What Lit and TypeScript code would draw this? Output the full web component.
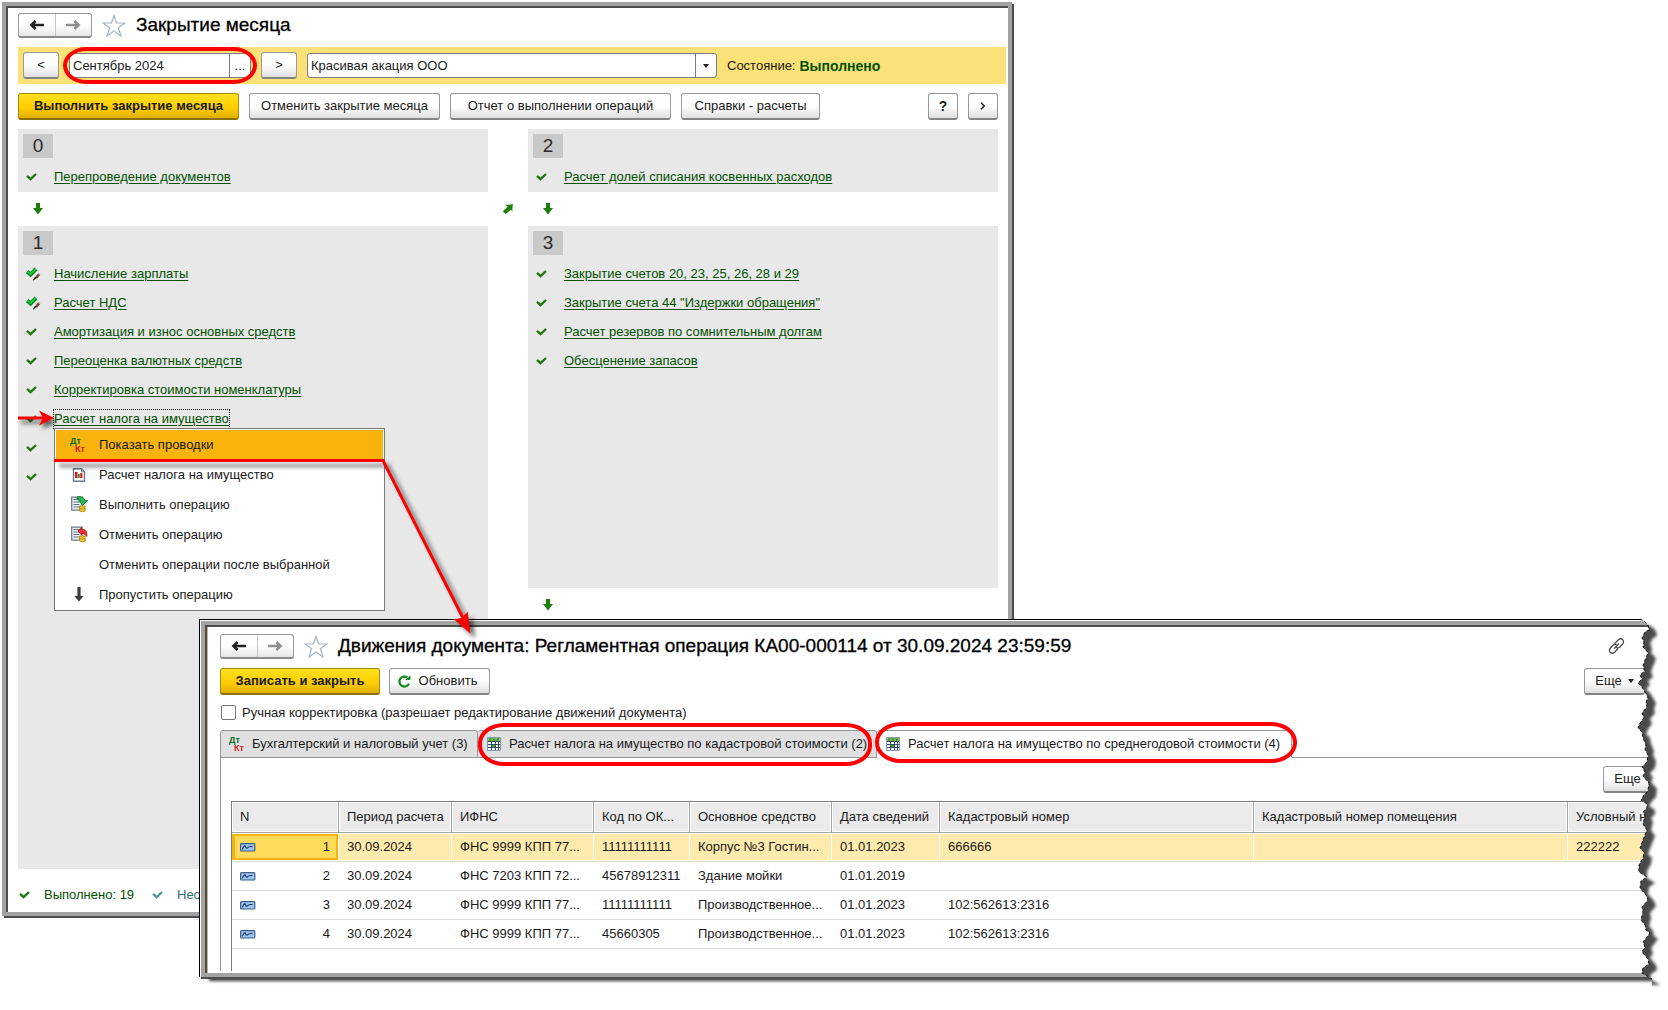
import { LitElement, html, css, svg, nothing } from "lit";
import { customElement } from "lit/decorators.js";
import { classMap } from "lit/directives/class-map.js";

const check = (color: string) => html`
  <svg class="ico" width="12" height="10" viewBox="0 0 12 10" aria-hidden="true">
    <path d="M1 3.8 L4.6 7.2 L10 2" fill="none" stroke=${color} stroke-width="2.4" />
  </svg>`;

const checkPencil = html`
  <svg class="ico" width="15" height="14" viewBox="0 0 15 14" aria-hidden="true">
    <path d="M1.2 4.6 L4.6 7.6 L10 2" fill="none" stroke="#0b8a1e" stroke-width="4" />
    <path d="M1.8 4.8 L4.6 7 L9.6 2.2" fill="none" stroke="#1cc83c" stroke-width="1.8" />
    <path d="M13 7.4 L10 11" stroke="#6e4530" stroke-width="2.6" />
    <path d="M13.6 6.6 L12.8 7.6" stroke="#caa496" stroke-width="2.4" />
    <path d="M10.4 10.6 L7.4 13.2 L8.8 10.6z" fill="#2a1a14" stroke="#2a1a14" stroke-width=".8" />
  </svg>`;

const downArrow = html`
  <svg class="ico" width="12" height="12" viewBox="0 0 12 12" aria-hidden="true">
    <path d="M4 0 H8 V5 H11 L6 11.5 L1 5 H4z" fill="#1f7d0c" />
  </svg>`;

const diagArrow = html`
  <svg class="ico" width="12" height="12" viewBox="0 0 12 12" aria-hidden="true">
    <path d="M3 1.4 Q7 2.2 11 1 Q10 5 10.6 8.6 L8.8 6.8 L3.6 11 L0.8 8.2 L5.6 3.8z" fill="#1f7d0c" />
  </svg>`;

const star = html`
  <svg class="star" width="24" height="23" viewBox="0 0 24 23" aria-hidden="true">
    <path d="M12 1.5 L14.6 9 H23 L16.4 13.8 L19 22 L12 17 L5 22 L7.6 13.8 L1 9 H9.4z"
      fill="#fff" stroke="#a9b4bf" stroke-width="1.2" />
  </svg>`;

const arrow = (color: string, flip: boolean) => html`
  <svg width="16" height="12" viewBox="0 0 16 12" aria-hidden="true">
    <path d=${flip ? "M1 6 H12 M9.4 2 L13.6 6 L9.4 10" : "M15 6 H4 M6.6 2 L2.4 6 L6.6 10"}
      fill="none" stroke=${color} stroke-width="2.6" />
  </svg>`;

const dtkt = html`
  <svg class="ico" width="18" height="16" viewBox="0 0 18 16" aria-hidden="true">
    <text x="0" y="7" font-family="Liberation Sans" font-weight="700" font-size="9" fill="#0b6b2b">Дт</text>
    <text x="5" y="15" font-family="Liberation Sans" font-weight="700" font-size="9" fill="#cc1f1f">Кт</text>
  </svg>`;

const report = html`
  <svg class="ico" width="14" height="14" viewBox="0 0 14 14" aria-hidden="true">
    <path d="M1.5 .8 H9.5 L12.5 3.8 V13.2 H1.5z" fill="#fff" stroke="#6c7f92" stroke-width="1.4" />
    <path d="M9.5 .8 V3.8 H12.5z" fill="#b9c6d3" stroke="#6c7f92" />
    <path d="M3 4h2.6v6H3z" fill="#e02020" />
    <path d="M6 6h1.8v4H6z" fill="#1c9a3c" />
    <path d="M8.2 5h2.2v5h-2.2z" fill="#e02020" />
  </svg>`;

const operation = (undo: boolean) => html`
  <svg class="ico" width="17" height="17" viewBox="0 0 17 17" aria-hidden="true">
    <path d="M.7 1.2 H11 V14.2 H.7z" fill="#eef3f8" stroke="#6e7f90" stroke-width="1.3" />
    <path d="M2.4 3.5h6M2.4 6h6M2.4 8.5h6M2.4 11h6" stroke="#5d7288" />
    <path d="M8.5 10 h5.6 v5 q-2.8 1.6-5.6 0z" fill="#f2c830" stroke="#a8810d" stroke-width=".8" />
    <path d="M8.5 12.4 q2.8 1.4 5.6 0" fill="none" stroke="#a8810d" stroke-width=".8" />
    ${undo
      ? svg`<path d="M7 5 L10.6 1.2 V3.2 Q16.8 3.4 15.8 10.4 Q14 7.6 10.6 7.2 V9z" fill="#f03030" stroke="#a01010" stroke-width=".8" />`
      : svg`<path d="M6 .8 Q13.4 0 13.6 4.4 H16.4 L11.8 9.2 L7.4 4.8 H10 Q9.6 2.8 6 3z" fill="#22c04a" stroke="#0c6e2a" stroke-width=".8" />`}
  </svg>`;

const skip = html`
  <svg class="ico" width="12" height="15" viewBox="0 0 12 15" aria-hidden="true">
    <path d="M4.4 0 H7.6 V9 H10.6 L6 14.4 L1.4 9 H4.4z" fill="#3c3c3c" />
  </svg>`;

const gridIcon = html`
  <svg class="ico" width="14" height="14" viewBox="0 0 14 14" aria-hidden="true">
    <path d="M.5 .5 H13.5 V13.5 H.5z" fill="#fff" stroke="#7d97aa" />
    <path d="M1 1h12v3H1z" fill="#8cc46a" />
    <path d="M2 1.6h2.4v2H2zM5.8 1.6h2.4v2H5.8zM9.6 1.6H12v2H9.6z" fill="#3f8a1e" />
    <path d="M1 4.5h12M1 7.5h12M1 10.5h12" stroke="#2f4c64" />
    <path d="M4.5 4v9M8.5 4v9M11.5 4v9" stroke="#2f4c64" />
    <path d="M5 8h3v2H5z" fill="#4d9a2c" />
  </svg>`;

const record = html`
  <svg class="ico" width="16" height="9" viewBox="0 0 16 9" aria-hidden="true">
    <rect x=".6" y=".6" width="14.2" height="7.4" rx="1" fill="#9cc6ee" stroke="#3d5f86" stroke-width="1.2" />
    <path d="M2.4 6.4 Q4 2 5.4 3 Q6 5.6 7.4 5 Q8.6 3.2 12.4 3.6" fill="none" stroke="#12305c" stroke-width="1.1" />
  </svg>`;

const refresh = html`
  <svg width="13" height="13" viewBox="0 0 13 13" aria-hidden="true">
    <path d="M11 8.6 A5 5 0 1 1 9.4 2.6" fill="none" stroke="#0e8a1f" stroke-width="2.2" />
    <path d="M7.4 5 H12.4 V.2z" fill="#0e8a1f" />
  </svg>`;

const link = html`
  <svg class="chain" width="17" height="18" viewBox="0 0 17 18" aria-hidden="true">
    <g fill="none" stroke="#4a4a4a" stroke-width="1.3" stroke-linecap="round">
      <path d="M7 6.4 L10.6 2.6 Q12.8 .8 14.8 2.8 Q16.4 4.8 14.6 7 L11.6 10.2 Q10 11.2 8.6 10.6" />
      <path d="M9.8 11.8 L6.4 15.4 Q4.2 17.2 2.2 15.2 Q.6 13.2 2.4 11 L5.4 7.8 Q6.6 7 8 7.4" />
      <path d="M6.6 11.2 L10.4 7" />
    </g>
  </svg>`;

type Task = { name: string; kind?: "pencil"; selected?: boolean };

const stageOne: Task[] = [
  { name: "Начисление зарплаты", kind: "pencil" },
  { name: "Расчет НДС", kind: "pencil" },
  { name: "Амортизация и износ основных средств" },
  { name: "Переоценка валютных средств" },
  { name: "Корректировка стоимости номенклатуры" },
  { name: "Расчет налога на имущество", selected: true },
  { name: "" },
  { name: "" },
];

const stageThree: Task[] = [
  { name: 'Закрытие счетов 20, 23, 25, 26, 28 и 29' },
  { name: 'Закрытие счета 44 "Издержки обращения"' },
  { name: "Расчет резервов по сомнительным долгам" },
  { name: "Обесценение запасов" },
];

const menuItems = [
  { icon: dtkt, name: "Показать проводки", active: true },
  { icon: report, name: "Расчет налога на имущество" },
  { icon: operation(false), name: "Выполнить операцию" },
  { icon: operation(true), name: "Отменить операцию" },
  { icon: nothing, name: "Отменить операции после выбранной" },
  { icon: skip, name: "Пропустить операцию" },
];

const base = css`
  * { box-sizing: border-box; }
  button, input, select {
    font: inherit;
    color: inherit;
    margin: 0;
  }
  .nav { display: flex; align-items: center; height: 24px; }
  .pair {
    display: flex;
    width: 74px;
    height: 25px;
    border: 1px solid #9b9b9b;
    border-bottom: 2px solid #8a8a8a;
    border-radius: 3px;
    background: linear-gradient(#fff 50%, #e6e6e6);
  }
  .pair button {
    flex: 1;
    display: flex;
    align-items: center;
    justify-content: center;
    border: 0;
    padding: 0;
    background: none;
  }
  .pair button + button { border-left: 1px solid #c4c4c4; }
  .star { margin: 0 10px; flex: none; }
  h1 {
    margin: 0;
    font-size: 19px;
    font-weight: 400;
    line-height: 24px;
    color: #000;
    white-space: nowrap;
    -webkit-text-stroke: 0.3px #000;
  }
  .btn {
    display: flex;
    align-items: center;
    justify-content: center;
    height: 27px;
    padding: 0 14px;
    border: 1px solid #989898;
    border-bottom: 2px solid #848484;
    border-radius: 3px;
    background: linear-gradient(#fff 50%, #dfdfdf);
    white-space: nowrap;
  }
  .gold {
    font-weight: 700;
    border-color: #a88a10;
    border-bottom-color: #8b7008;
    background: linear-gradient(#ffe01f, #ffcf00 55%, #e2b000);
  }
  .ico { display: block; flex: none; }
  .caret {
    width: 0;
    height: 0;
    border: 3px solid transparent;
    border-top: 4px solid #222;
    border-bottom: 0;
  }
`;

@customElement("closing-window")
export class ClosingWindow extends LitElement {
  static styles = [
    base,
    css`
      :host {
        display: flex;
        flex-direction: column;
        box-sizing: border-box;
        isolation: isolate;
        padding: 7px 2px 0 12px;
        border: 4px solid #a3a3a3;
        box-shadow: 2px 2px 0 #4d4d4d, inset 2px 2px 0 #4d4d4d;
        background: #fff;
      }
      .period {
        display: flex;
        align-items: center;
        gap: 10px;
        height: 37px;
        margin-top: 10px;
        padding: 0 5px;
        background: #fbe177;
      }
      .step { width: 36px; padding: 0; }
      .field {
        position: relative;
        display: flex;
        height: 25px;
        border: 1px solid #7d7d7d;
        border-radius: 3px;
        background: #fff;
      }
      .field input, .field select {
        flex: 1;
        min-width: 0;
        appearance: none;
        border: 0;
        padding: 0 3px;
        background: none;
        border-radius: 3px;
      }
      .field .more {
        width: 21px;
        border: 0;
        border-left: 1px solid #7d7d7d;
        padding: 0;
        background: none;
      }
      .field .drop {
        display: flex;
        align-items: center;
        justify-content: center;
        width: 21px;
        border-left: 1px solid #7d7d7d;
      }
      .date { width: 182px; }
      .date::after {
        content: "";
        position: absolute;
        inset: -7px;
        border: 4px solid #fe0000;
        border-radius: 24px / 19px;
        pointer-events: none;
      }
      .org { width: 410px; }
      .state { display: flex; gap: 4px; white-space: nowrap; }
      .state b { color: #005000; font-size: 14px; }
      .commands { display: flex; gap: 10px; margin: 9px 8px 0 0; }
      .commands .btn { flex: none; }
      .w-run { width: 221px; }
      .w-cancel { width: 191px; }
      .w-report { width: 221px; }
      .w-ref { width: 139px; }
      .commands .btn.help { width: 30px; padding: 0; font-weight: 700; font-size: 14px; margin-left: auto; }
      .commands .btn.next { width: 30px; padding: 0; font-weight: 700; }
      .stages {
        flex: 1;
        display: grid;
        grid-template-columns: 1fr 40px 1fr;
        margin: 9px 8px 0 0;
      }
      .col { display: flex; flex-direction: column; }
      .panel { padding: 5px 5px 1px; background: #e8e8e8; }
      .fill { flex: 1; }
      .tall { min-height: 362px; }
      .num {
        width: 30px;
        height: 24px;
        margin: 0 0 4px;
        font-size: 19px;
        font-weight: 400;
        line-height: 24px;
        text-align: center;
        background: #c9c9c9;
        color: #2b2b2b;
      }
      .flow { display: flex; align-items: center; height: 34px; padding-left: 14px; }
      .mid { display: flex; justify-content: center; padding-top: 74px; }
      ul { list-style: none; margin: 0; padding: 0; }
      .task { position: relative; display: flex; align-items: center; height: 29px; }
      .mark { width: 31px; padding-left: 3px; }
      .task a { color: #005000; text-underline-offset: 2px; }
      .selected a { outline: 1px dotted #000; outline-offset: 0; padding: 1px 0; }
      .pointer {
        position: absolute;
        left: -5px;
        top: 4px;
        filter: drop-shadow(3px 4px 2px rgba(0, 0, 0, 0.6));
      }
      .menu {
        position: absolute;
        z-index: 1;
        left: 31px;
        top: 24px;
        width: 331px;
        padding: 1px 1px 0;
        border: 1px solid #7a7a7a;
        background: #fff;
      }
      .menu button {
        display: flex;
        align-items: center;
        width: 100%;
        height: 30px;
        border: 0;
        padding: 0 0 1px;
        background: none;
        text-align: left;
      }
      .menu .active { background: #f8b30c; }
      .menu .glyph { display: flex; justify-content: center; width: 43px; padding-left: 3px; }
      .status {
        display: flex;
        align-items: center;
        height: 43px;
        padding: 9px 0 0 1px;
        color: #005000;
      }
      .done { width: 108px; }
      .status .mark2 { width: 25px; }
      .todo { color: #2b6f72; }
    `,
  ];

  private task(t: Task) {
    return html`
      <li class=${classMap({ task: true, selected: !!t.selected })}>
        <span class="mark">${t.kind ? checkPencil : check("#1f7a0c")}</span>
        ${t.name ? html`<a href="#">${t.name}</a>` : nothing}
        ${t.selected
          ? html`
              <svg class="pointer" width="36" height="20" viewBox="0 0 36 20" aria-hidden="true">
                <path d="M0 10 H26" stroke="#fe0000" stroke-width="3" />
                <path d="M36 10 L21 2.5 L25 10 L21 17.5z" fill="#fe0000" />
              </svg>
              <div class="menu" role="menu">
                ${menuItems.map(
                  (m) => html`
                    <button role="menuitem" class=${classMap({ active: !!m.active })}>
                      <span class="glyph">${m.icon}</span>${m.name}
                    </button>`
                )}
              </div>`
          : nothing}
      </li>`;
  }

  private panel(num: number, tasks: Task[], extra = "") {
    return html`
      <section class="panel ${extra}">
        <h2 class="num">${num}</h2>
        <ul>${tasks.map((t) => this.task(t))}</ul>
      </section>`;
  }

  render() {
    return html`
      <header class="nav">
        <div class="pair">
          <button aria-label="Назад">${arrow("#222", false)}</button>
          <button aria-label="Вперед">${arrow("#8f8f8f", true)}</button>
        </div>
        ${star}
        <h1>Закрытие месяца</h1>
      </header>
      <div class="period">
        <button class="btn step">&lt;</button>
        <div class="field date">
          <input aria-label="Период" value="Сентябрь 2024" />
          <button class="more" aria-label="Выбрать период">...</button>
        </div>
        <button class="btn step">&gt;</button>
        <div class="field org">
          <select aria-label="Организация"><option>Красивая акация ООО</option></select>
          <span class="drop"><span class="caret"></span></span>
        </div>
        <div class="state"><span>Состояние:</span><b>Выполнено</b></div>
      </div>
      <div class="commands">
        <button class="btn gold w-run">Выполнить закрытие месяца</button>
        <button class="btn w-cancel">Отменить закрытие месяца</button>
        <button class="btn w-report">Отчет о выполнении операций</button>
        <button class="btn w-ref">Справки - расчеты</button>
        <button class="btn help">?</button>
        <button class="btn next" aria-label="Далее">
          <svg width="6" height="8" viewBox="0 0 6 8" aria-hidden="true">
            <path d="M1 .8 L4.2 4 L1 7.2" fill="none" stroke="#222" stroke-width="1.6" />
          </svg>
        </button>
      </div>
      <main class="stages">
        <div class="col">
          ${this.panel(0, [{ name: "Перепроведение документов" }])}
          <div class="flow">${downArrow}</div>
          ${this.panel(1, stageOne, "fill")}
        </div>
        <div class="mid">${diagArrow}</div>
        <div class="col">
          ${this.panel(2, [{ name: "Расчет долей списания косвенных расходов" }])}
          <div class="flow">${downArrow}</div>
          ${this.panel(3, stageThree, "tall")}
          <div class="flow">${downArrow}</div>
        </div>
      </main>
      <footer class="status">
        <span class="mark2">${check("#1f7a0c")}</span><span class="done">Выполнено: 19</span>
        <span class="mark2">${check("#4f9c9a")}</span><span class="todo">Нео</span>
      </footer>`;
  }
}

const columns = [
  { name: "N", width: 107 },
  { name: "Период расчета", width: 113 },
  { name: "ИФНС", width: 142 },
  { name: "Код по ОК...", width: 96 },
  { name: "Основное средство", width: 142 },
  { name: "Дата сведений", width: 108 },
  { name: "Кадастровый номер", width: 314 },
  { name: "Кадастровый номер помещения", width: 314 },
  { name: "Условный н", width: 0 },
];

const rows = [
  ["1", "30.09.2024", "ФНС 9999 КПП 77...", "11111111111", "Корпус №3 Гостин...", "01.01.2023", "666666", "", "222222"],
  ["2", "30.09.2024", "ФНС 7203 КПП 72...", "45678912311", "Здание мойки", "01.01.2019", "", "", ""],
  ["3", "30.09.2024", "ФНС 9999 КПП 77...", "11111111111", "Производственное...", "01.01.2023", "102:562613:2316", "", ""],
  ["4", "30.09.2024", "ФНС 9999 КПП 77...", "45660305", "Производственное...", "01.01.2023", "102:562613:2316", "", ""],
];

@customElement("entries-window")
export class EntriesWindow extends LitElement {
  static styles = [
    base,
    css`
      :host {
        display: flex;
        box-sizing: border-box;
        border: 1px solid #000;
        border-width: 1px 0 0 1px;
        padding: 1px 0 0 1px;
        background: #fff;
        box-shadow: 10px 4px 3px #3c3c3c;
      }
      .frame {
        flex: 1;
        min-width: 0;
        display: flex;
        flex-direction: column;
        padding: 9px 0 2px 15px;
        border: 4px solid #a3a3a3;
        border-right: 0;
        box-shadow: inset 2px 2px 0 #4d4d4d, inset 3px 0 0 #c9b37c, 0 2px 0 #4d4d4d;
        overflow: hidden;
      }
      .chain { margin: 0 29px 0 auto; }
      .commands { display: flex; gap: 9px; margin-top: 10px; }
      .save { width: 160px; }
      .reload { width: 101px; gap: 8px; padding: 0 10px 0 6px; }
      .more { width: 61px; gap: 6px; padding: 0; margin: 0 9px 0 auto; }
      .manual {
        display: flex;
        align-items: center;
        gap: 6px;
        height: 15px;
        margin: 10px 0 0 1px;
        white-space: nowrap;
      }
      .manual input {
        appearance: none;
        width: 15px;
        height: 15px;
        border: 1px solid #777;
        border-radius: 2px;
        background: #fff;
      }
      .tabs { display: flex; margin-top: 10px; }
      .tab {
        position: relative;
        display: flex;
        align-items: center;
        gap: 8px;
        height: 28px;
        margin-bottom: -1px;
        padding: 0 9px;
        border: 1px solid #979797;
        border-left-width: 0;
        border-radius: 3px 3px 0 0;
        background: #e0e0e0;
        white-space: nowrap;
      }
      .tab:first-child { border-left-width: 1px; padding-left: 8px; gap: 5px; width: 258px; }
      .second { width: 399px; }
      .third { width: 415px; background: #fff; border-bottom-color: #fff; }
      .ring::after {
        content: "";
        position: absolute;
        z-index: 1;
        border: 4px solid #fe0000;
        border-radius: 26px / 20px;
        pointer-events: none;
      }
      .second::after { inset: -8px 4px -9px 0; }
      .third::after { inset: -9px -6px -6px -2px; }
      .pane {
        flex: 1;
        display: flex;
        flex-direction: column;
        padding: 8px 0 0 10px;
        border: 1px solid #979797;
        border-width: 1px 0 0 1px;
      }
      .pane .more { margin-right: -10px; }
      .grid {
        flex: 1;
        margin-top: 8px;
        border: 1px solid #7c7c7c;
        border-width: 1px 0 0 1px;
        overflow: hidden;
      }
      table { width: 100%; table-layout: fixed; border-collapse: separate; border-spacing: 0; }
      th, td {
        padding: 0 0 0 8px;
        font-weight: 400;
        text-align: left;
        white-space: nowrap;
        overflow: hidden;
      }
      th {
        height: 31px;
        border-right: 1px solid #a6a6a6;
        border-bottom: 1px solid #a6a6a6;
        background: #ebebeb;
        box-shadow: inset 0 0 0 1px #fff;
      }
      td { height: 29px; border-bottom: 1px solid #d9d9d9; }
      .current td { background: #ffebad; box-shadow: inset -1px 1px 0 #fff, inset 0 -1px 0 #fff; }
      .current td:first-child { background: #ffdb5c; box-shadow: inset -1px 1px 0 #fff, inset 0 -1px 0 #fff, inset 0 0 0 3px #f8b30c; }
      .n { display: flex; align-items: center; justify-content: space-between; padding-right: 9px; }
    `,
  ];

  render() {
    return html`
      <div class="frame">
        <header class="nav">
          <div class="pair">
            <button aria-label="Назад">${arrow("#222", false)}</button>
            <button aria-label="Вперед">${arrow("#8f8f8f", true)}</button>
          </div>
          ${star}
          <h1>Движения документа: Регламентная операция КА00-000114 от 30.09.2024 23:59:59</h1>
          ${link}
        </header>
        <div class="commands">
          <button class="btn gold save">Записать и закрыть</button>
          <button class="btn reload">${refresh}Обновить</button>
          <button class="btn more">Еще<span class="caret"></span></button>
        </div>
        <label class="manual">
          <input type="checkbox" />Ручная корректировка (разрешает редактирование движений документа)
        </label>
        <div class="tabs" role="tablist">
          <button class="tab" role="tab">${dtkt}Бухгалтерский и налоговый учет (3)</button>
          <button class="tab second ring" role="tab">${gridIcon}Расчет налога на имущество по кадастровой стоимости (2)</button>
          <button class="tab third ring" role="tab" aria-selected="true">${gridIcon}Расчет налога на имущество по среднегодовой стоимости (4)</button>
        </div>
        <div class="pane">
          <button class="btn more">Еще<span class="caret"></span></button>
          <div class="grid">
            <table>
              <colgroup>
                ${columns.map((c) => html`<col width=${c.width || nothing} />`)}
              </colgroup>
              <thead><tr>${columns.map((c) => html`<th scope="col">${c.name}</th>`)}</tr></thead>
              <tbody>
                ${rows.map(
                  (r, i) => html`
                    <tr class=${classMap({ current: i === 0 })}>
                      ${r.map((v, j) => html`<td>${j === 0 ? html`<span class="n">${record}${v}</span>` : v}</td>`)}
                    </tr>`
                )}
              </tbody>
            </table>
          </div>
        </div>
      </div>`;
  }
}

const tear =
  "6,0 10,2 14,6 15,11 11,13 8,19 10,23 9,28 12,31 14,34 11,41 9,47 11,52 6,56 8,60 4,64 8,68 11,73 14,78 12,84 13,88 8,94 10,99 6,104 4,109 8,113 9,119 12,126 11,130 14,136 13,143 8,148 11,153 9,157 15,164 14,172 10,176 7,181 13,185 13,189 9,193 11,197 9,205 13,211 9,221 6,229 10,233 9,239 5,246 5,253 13,258 7,262 6,269 12,276 14,281 8,288 9,293 7,301 11,306 12,311 16,314 9,323 11,328 8,333 14,340 15,345 9,349 8,354 13,357 18,360";

@customElement("app-root")
export class AppRoot extends LitElement {
  static styles = css`
    :host {
      display: block;
      position: relative;
      min-height: 100vh;
      overflow: hidden;
      background: #fff;
      font: 13px/16px "Liberation Sans", Arial, sans-serif;
      color: #1a1a1a;
    }
    closing-window { position: absolute; inset: 2px 656px 94px 2px; }
    entries-window { position: absolute; inset: 619px 14px 33px 199px; }
    .tear { position: absolute; right: 0; top: 618px; }
    .callout {
      position: absolute;
      left: 54px;
      top: 450px;
      pointer-events: none;
      filter: drop-shadow(5px 5px 2px rgba(0, 0, 0, 0.55));
    }
  `;

  render() {
    return html`
      <closing-window></closing-window>
      <entries-window></entries-window>
      <svg class="tear" width="34" height="380" viewBox="0 -1 34 380" aria-hidden="true">
        <defs>
          <clipPath id="outside"><polygon points="${tear} 18,379 34,379 34,-1 6,-1" /></clipPath>
          <filter id="soft" x="-50%" y="-5%" width="200%" height="110%"><feGaussianBlur stdDeviation="1.6" /></filter>
        </defs>
        <g clip-path="url(#outside)">
          <rect x="0" y="-1" width="34" height="380" fill="#fff" />
          <polygon points="-20,0 ${tear} -20,360" fill="#484848" filter="url(#soft)" transform="translate(8 6)" />
        </g>
        <polyline points=${tear} fill="none" stroke="#111" stroke-width="1" stroke-dasharray="3 2" />
      </svg>
      <svg class="callout" width="440" height="200" viewBox="0 0 440 200" aria-hidden="true">
        <path d="M0 10.5 H329 L409 168" fill="none" stroke="#fe0000" stroke-width="3" />
        <path d="M415 181 L402 170 L408 169 L413 164z" fill="#fe0000" stroke="#fe0000" stroke-width="2" />
      </svg>`;
  }
}
